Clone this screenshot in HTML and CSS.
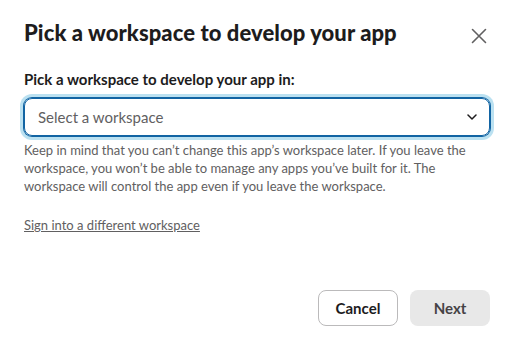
FILE: index.html
```html
<!DOCTYPE html>
<html lang="en">
<head>
    <meta charset="UTF-8">
    <title>Pick a workspace</title>
    <link rel="stylesheet" href="styles.css">
</head>
<body>

<div class="modal">
    <!-- Header -->
    <div class="modal-header">
        <h1 class="modal-title">Pick a workspace to develop your app</h1>
        <button class="close-button" aria-label="Close">
            <svg width="16" height="16" viewBox="0 0 16 16">
                <path d="M1.5 1.5 L14.5 14.5 M14.5 1.5 L1.5 14.5" stroke="#616061" stroke-width="1.6" stroke-linecap="round" fill="none"/>
            </svg>
        </button>
    </div>

    <!-- Body -->
    <div class="modal-body">
        <label class="field-label" for="workspace">Pick a workspace to develop your app in:</label>
        <div class="select" id="workspace">
            <span class="select-placeholder">Select a workspace</span>
            <svg class="select-caret" width="10" height="6" viewBox="0 0 10 6">
                <path d="M1 1 L5 5 L9 1" stroke="#1d1c1d" stroke-width="1.5" stroke-linecap="round" stroke-linejoin="round" fill="none"/>
            </svg>
        </div>
        <p class="help-text">Keep in mind that you can’t change this app’s workspace later. If you leave the workspace, you won’t be able to manage any apps you’ve built for it. The workspace will control the app even if you leave the workspace.</p>
        <a class="sign-link" href="#">Sign into a different workspace</a>
    </div>

    <!-- Footer -->
    <div class="modal-footer">
        <button class="btn btn-cancel">Cancel</button>
        <button class="btn btn-next">Next</button>
    </div>
</div>

</body>
</html>
```

FILE: styles.css
```css
body {
    margin: 0;
    background-color: #fff;
    font-family: Lato, "Noto Sans", sans-serif;
    color: #1d1c1d;
}

.modal {
    width: 514px;
    height: 348px;
    box-sizing: border-box;
    padding: 0 24px;
    display: flex;
    flex-direction: column;
}

.modal-header {
    display: flex;
    align-items: center;
    justify-content: space-between;
    padding-top: 11px;
}

.modal-title {
    margin: 0;
    font-size: 22px;
    font-weight: 900;
    line-height: 30px;
    letter-spacing: 0.08px;
}

.close-button {
    width: 36px;
    height: 36px;
    margin-right: -7px;
    margin-top: 7px;
    border: none;
    background: none;
    padding: 0;
    display: flex;
    align-items: center;
    justify-content: center;
    cursor: pointer;
}

.modal-body {
    margin-top: 14px;
}

.field-label {
    display: block;
    font-size: 15px;
    font-weight: 700;
    line-height: 22px;
    margin-bottom: 8px;
}

.select {
    height: 36px;
    border: 1px solid #1264a3;
    border-radius: 8px;
    box-shadow: 0 0 0 1px #1264a3, 0 0 0 4px rgba(29, 155, 209, 0.3);
    display: flex;
    align-items: center;
    justify-content: space-between;
    padding: 0 12px 0 13px;
}

.select-placeholder {
    font-size: 15px;
    color: #616061;
}

.help-text {
    margin: 5px 0 0;
    font-size: 13px;
    line-height: 18px;
    color: #616061;
}

.sign-link {
    display: inline-block;
    margin-top: 21px;
    font-size: 13px;
    line-height: 18px;
    color: #616061;
}

.modal-footer {
    margin-top: auto;
    margin-bottom: 22px;
    display: flex;
    justify-content: flex-end;
    gap: 12px;
}

.btn {
    width: 80px;
    height: 36px;
    border-radius: 8px;
    font-family: Lato, "Noto Sans", sans-serif;
    font-size: 15px;
    font-weight: 700;
    cursor: pointer;
}

.btn-cancel {
    background-color: #fff;
    border: 1px solid #bbbabb;
    color: #1d1c1d;
}

.btn-next {
    background-color: #e8e8e8;
    border: none;
    color: #454245;
}
```
